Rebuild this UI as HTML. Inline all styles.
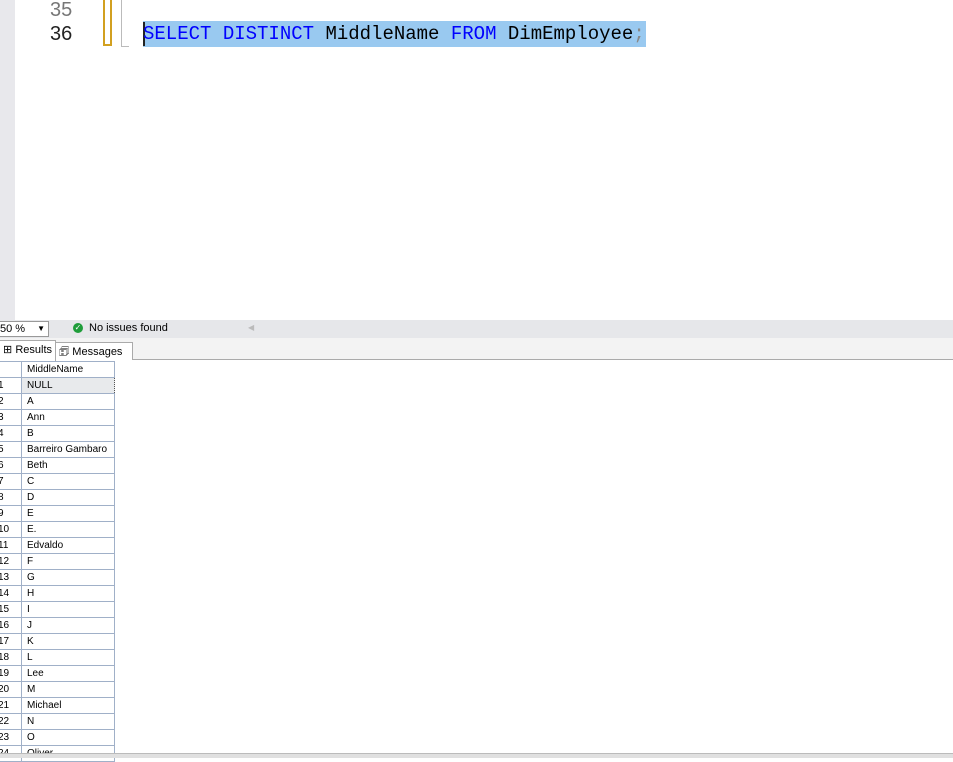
<!DOCTYPE html><html><head><style>
body{margin:0;width:953px;height:757px;overflow:hidden;background:#fff;font-family:"Liberation Sans",sans-serif;position:relative}
.a{position:absolute}
.code{font-family:"Liberation Mono",monospace;font-size:19px;white-space:pre}
.ln{font-family:"Liberation Sans",sans-serif;font-size:20px}
table{border-collapse:collapse;font-size:10px;position:absolute;left:-5px;top:361px}
td{height:15px;border:1px solid #a0b0c8;padding:0 0 0 5px;line-height:15px;color:#000}
td:first-child{width:23px;padding-left:2px}
td:nth-child(2){width:87px}
</style></head><body>
<div class="a" style="left:0;top:0;width:15px;height:320px;background:#e8e8ec"></div>
<div class="a ln" style="left:50px;top:-1px;color:#777">35</div>
<div class="a ln" style="left:50px;top:23px;color:#222">36</div>
<div class="a" style="left:103px;top:0;width:5px;height:44px;border:2px solid #d2a020;border-top:none;box-sizing:content-box"></div>
<div class="a" style="left:121px;top:0;width:7px;height:46px;border-left:1px solid #bbb;border-bottom:1px solid #bbb"></div>
<div class="a" style="left:143px;top:21px;width:503px;height:26px;background:#99c9f0"></div>
<div class="a" style="left:143px;top:22px;width:2px;height:24px;background:#222"></div>
<div class="a code" style="left:143px;top:23px"><span style="color:#0000ff">SELECT DISTINCT</span> <span style="color:#000">MiddleName</span> <span style="color:#0000ff">FROM</span> <span style="color:#000">DimEmployee</span><span style="color:#888">;</span></div>
<div class="a" style="left:0;top:320px;width:953px;height:18px;background:#e6e7ea"></div>
<div class="a" style="left:-1px;top:321px;width:48px;height:14px;background:#fff;border:1px solid #999;font-size:11px;line-height:14px">50 %<span style="position:absolute;right:3px;font-size:8px">▼</span></div>
<div class="a" style="left:73px;top:323px;width:10px;height:10px;border-radius:50%;background:#1f9d3a;color:#fff;font-size:8px;line-height:10px;text-align:center">✓</div>
<div class="a" style="left:89px;top:322px;font-size:11px">No issues found</div>
<div class="a" style="left:248px;top:323px;font-size:8px;color:#bbb">◀</div>
<div class="a" style="left:0;top:338px;width:953px;height:22px;background:#f3f3f3"></div>
<div class="a" style="left:0;top:359px;width:953px;height:1px;background:#aaa"></div>
<div class="a" style="left:-1px;top:340px;width:55px;height:20px;background:#fff;border:1px solid #aaa;border-bottom:none;font-size:11px;line-height:19px">&nbsp;⊞ Results</div>
<div class="a" style="left:55px;top:342px;width:76px;height:17px;background:#fff;border:1px solid #aaa;border-bottom:none;font-size:11px;line-height:18px">&nbsp;🗊 Messages</div>
<table>
<tr><td></td><td>MiddleName</td></tr>
<tr><td>1</td><td style="background:#e8eaec;border:1px dotted #555">NULL</td></tr>
<tr><td>2</td><td>A</td></tr><tr><td>3</td><td>Ann</td></tr><tr><td>4</td><td>B</td></tr>
<tr><td>5</td><td>Barreiro Gambaro</td></tr><tr><td>6</td><td>Beth</td></tr><tr><td>7</td><td>C</td></tr>
<tr><td>8</td><td>D</td></tr><tr><td>9</td><td>E</td></tr><tr><td>10</td><td>E.</td></tr>
<tr><td>11</td><td>Edvaldo</td></tr><tr><td>12</td><td>F</td></tr><tr><td>13</td><td>G</td></tr>
<tr><td>14</td><td>H</td></tr><tr><td>15</td><td>I</td></tr><tr><td>16</td><td>J</td></tr>
<tr><td>17</td><td>K</td></tr><tr><td>18</td><td>L</td></tr><tr><td>19</td><td>Lee</td></tr>
<tr><td>20</td><td>M</td></tr><tr><td>21</td><td>Michael</td></tr><tr><td>22</td><td>N</td></tr>
<tr><td>23</td><td>O</td></tr><tr><td>24</td><td>Oliver</td></tr>
</table>
<div class="a" style="left:0;top:753px;width:953px;height:4px;background:#e0e0e0;border-top:1px solid #bbb;z-index:5"></div>
</body></html>
